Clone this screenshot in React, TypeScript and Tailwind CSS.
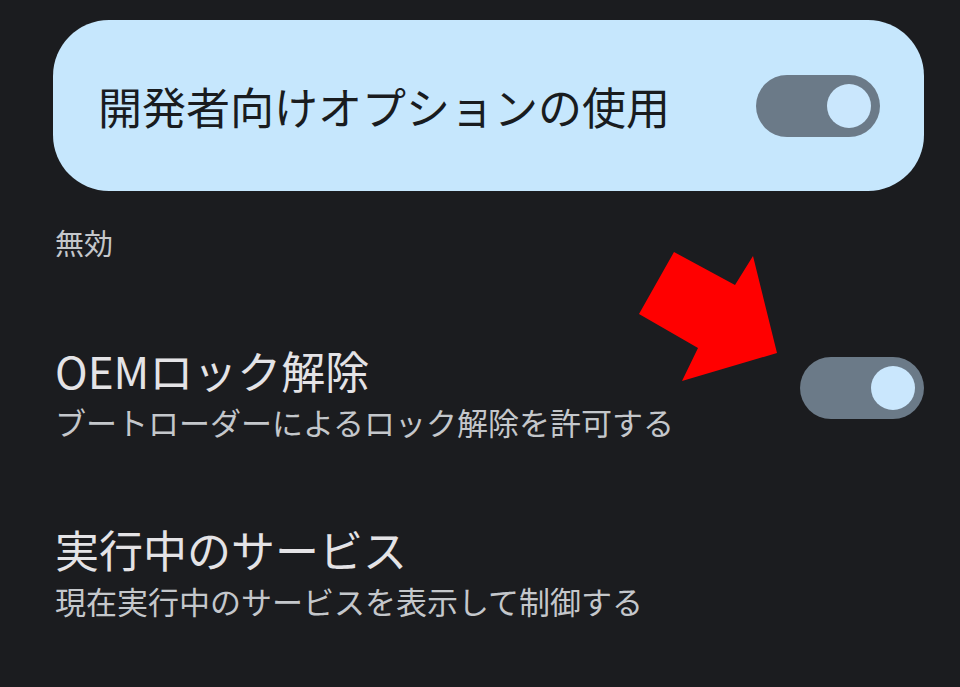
import React from "react";

const FONT = { fontFamily: '"Noto Sans CJK JP", "Noto Sans", sans-serif' };

function Toggle() {
  return (
    <div className="flex h-[62px] w-[124px] shrink-0 items-center justify-end rounded-full bg-[#6b7a88] pr-[9px]">
      <div className="h-[44px] w-[44px] rounded-full bg-[#cae7fd]" />
    </div>
  );
}

function SettingRow({ title, summary, toggle }: { title: string; summary: string; toggle?: boolean }) {
  return (
    <div className="flex items-center justify-between pl-[2px]">
      <div>
        <div className="text-[44px] leading-[54px] text-[#e4e3e6]">{title}</div>
        <div className="text-[31px] leading-[50px] text-[#c4c7cb]">{summary}</div>
      </div>
      {toggle && (
        <div className="-mt-[14px]">
          <Toggle />
        </div>
      )}
    </div>
  );
}

export default function App() {
  return (
    <div className="relative h-[687px] w-[960px] overflow-hidden bg-[#1b1c1f] pl-[53px] pr-[36px] pt-[20px]" style={FONT}>
      <div className="flex h-[171px] items-center justify-between rounded-[56px] bg-[#c6e7fd] pl-[45px] pr-[44px]">
        <span className="text-[44px] leading-[54px] text-[#191c1f]">開発者向けオプションの使用</span>
        <Toggle />
      </div>

      <div className="mt-[31px] pl-[2px] text-[29px] leading-[40px] text-[#c4c7cb]">無効</div>

      <div className="mt-[81px] flex flex-col gap-[75px]">
        <SettingRow title="OEMロック解除" summary="ブートローダーによるロック解除を許可する" toggle />
        <SettingRow title="実行中のサービス" summary="現在実行中のサービスを表示して制御する" />
      </div>

      {/* annotation arrow */}
      <svg className="pointer-events-none absolute left-0 top-0" width="960" height="687" viewBox="0 0 960 687">
        <polygon points="777,353 682,381 698,348 639,314 674,252 735,285 753,256" fill="#ff0000" />
      </svg>
    </div>
  );
}
